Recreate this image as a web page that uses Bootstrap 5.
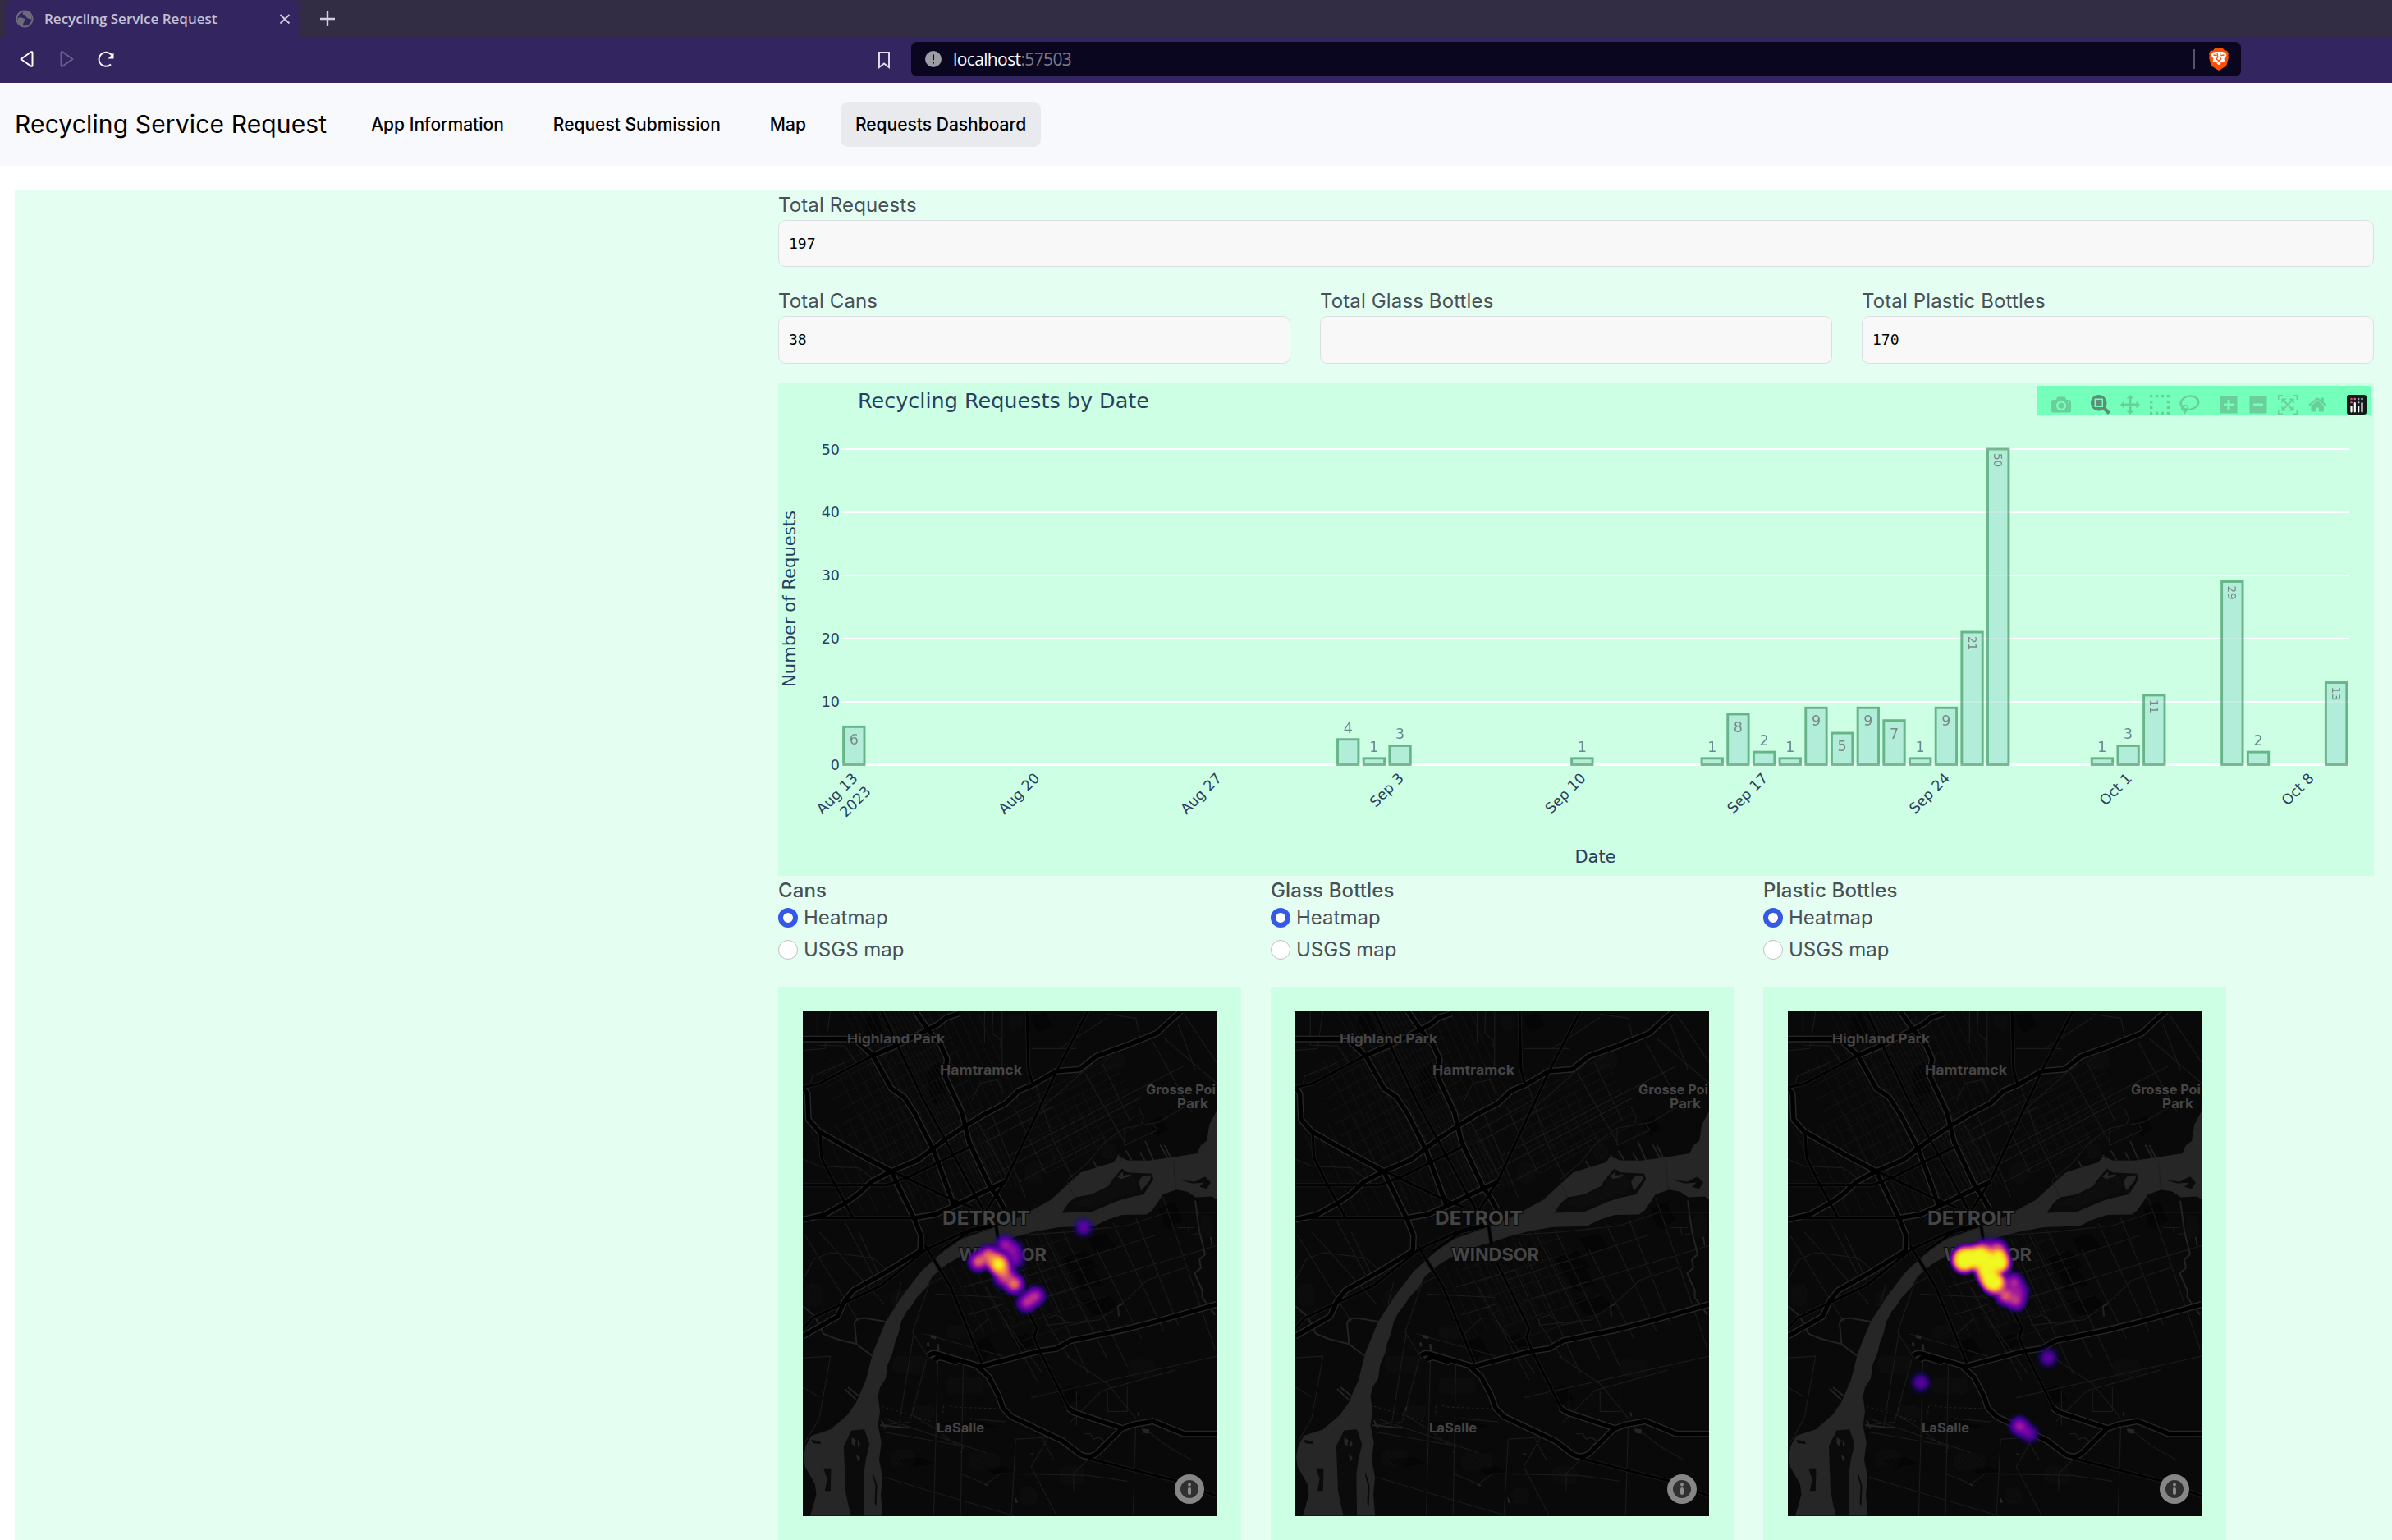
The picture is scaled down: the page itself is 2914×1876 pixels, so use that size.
<!DOCTYPE html>
<html lang="en">
<head>
<meta charset="utf-8">
<title>Recycling Service Request</title>
<link href="https://cdn.jsdelivr.net/npm/bootstrap@5.3.0/dist/css/bootstrap.min.css" rel="stylesheet">
<style>
  body{width:2914px;height:1876px;overflow:hidden;font-family:Inter,sans-serif;font-size:24px;color:#495057;background:#fff}
  .tabstrip{height:45px;background:#322d44;padding-left:6px}
  .browser-tab{width:360px;background:#33255f;border-radius:8px 8px 0 0;padding:0 12px 0 13px;color:#c5c0d4;font:600 17px "Open Sans",sans-serif}
  .tab-title{margin-left:13px}
  .addressbar{height:56px;background:#33255f;padding-left:24px}
  .nav-icons{width:1046px}
  .urlbox{width:1620px;height:42px;margin-left:26px;margin-top:-2px;background:#0b0620;border-radius:7px;padding:0 15px 0 17px;font:21px "Open Sans",sans-serif;color:#fff}
  .urltext{margin-left:14px;letter-spacing:-.62px}
  .urltext span{color:#7c7a88}
  .urlsep{width:2px;height:24px;background:#57536b;margin-right:17px}
  .app-nav{height:101px;background:#f8f9fc;padding:0 18px}
  .app-nav .navbar-brand{font-size:30px;line-height:45px;color:#000;margin-right:36px;padding:0;letter-spacing:.14px}
  .app-nav .nav-pills{gap:24px;margin-left:0}
  .app-nav .nav-link{font-size:21px;line-height:31px;font-weight:500;color:#000;padding:12px 18px;border-radius:9px}
  .app-nav .nav-link.active{background:#e9eaed;color:#000}
  .page-body{margin:30px 0 0 18px;height:1644px;background:#e4fff2}
  .side{width:930px;flex:none}
  .content{width:1944px;flex:none}
  .lbl{line-height:36px;height:36px;letter-spacing:.13px}
  .value-box{height:57px;background:#f8f8f8;border:1px solid #dbdfe3;border-radius:9px;padding:0 12px;font:500 18px/55px "DejaVu Sans Mono",monospace;color:#000}
  .row-b .value-box{height:58px}
  .gap36{gap:36px}
  .chart{height:600px;background:#cdffe5}
  .chart svg{display:block;font-family:"DejaVu Sans",sans-serif}
  .map-col{width:564px;flex:none}
  .map-head{height:33px;line-height:36px;font-weight:500;color:#495057;letter-spacing:.13px}
  .radio-line{height:36px;line-height:36px;margin-bottom:3px;gap:7px}
  .radio-line .form-check-input{width:24px;height:24px;margin:0;border:1.5px solid #bfbfbf;background-color:#fff}
  .radio-line .form-check-input:checked{border:6px solid #3459e6;background:#fff}
  .map-card{margin-top:27px;height:680px;background:#cdffe5;padding:30px}
  .map-card svg{display:block;font-family:Inter,sans-serif}
  .geo path{vector-effect:non-scaling-stroke;fill:none;stroke-linejoin:round}
</style>
</head>
<body>
<div class="tabstrip d-flex align-items-stretch">
  <div class="browser-tab d-flex align-items-center">
    <svg width="22" height="22" viewBox="0 0 22 22"><circle cx="11" cy="11" r="9.6" fill="none" stroke="#6c6b79" stroke-width="2"/><path d="M3 10c3-1 6 0 8 1 2 1 0 3-1 4-1 2-1 4-2 5-4-1-6-5-5-10zM10 2c-2 2-2 4 1 4 1 2 3 1 2 3 1 2 4 1 6 3 2-5-3-11-9-10z" fill="#6c6b79"/></svg>
    <span class="tab-title">Recycling Service Request</span>
    <svg class="ms-auto" width="14" height="14" viewBox="0 0 14 14"><path d="M1.500 2l11 10.500M12.500 2l-11 10.500" stroke="#d0cddb" stroke-width="1.900"/></svg>
  </div>
  <div class="d-flex align-items-center ps-4"><svg width="18" height="18" viewBox="0 0 18 18"><path d="M9 0v18M0 9h18" stroke="#d3d0dc" stroke-width="2.400"/></svg></div>
</div>
<div class="addressbar d-flex align-items-center">
  <div class="nav-icons d-flex align-items-center">
    <svg width="120" height="24" viewBox="0 0 120 24" fill="none" stroke-linejoin="round" stroke-width="2"><path d="M1.500 11l12-8.500q2-1 2 1v15q0 2-2 1z" stroke="#fff"/><path d="M64.500 11l-12-8.500q-2-1-2 1v15q0 2 2 1z" stroke="#6a5f8c"/><path d="M111 17.500a8.600 8.600 0 1 1 .5-12l2 2.500" stroke="#fff" stroke-width="2"/><path d="M114.500 3.500v7h-7z" fill="#fff"/></svg>
  </div>
  <svg width="14" height="22" viewBox="0 0 14 22"><path d="M1 2h12v18l-6-4.500L1 20z" fill="none" stroke="#e4e1ec" stroke-width="1.900"/></svg>
  <div class="urlbox d-flex align-items-center">
    <svg width="20" height="20" viewBox="0 0 20 20"><circle cx="10" cy="10" r="10" fill="#9c9da5"/><path d="M10 4.500v6.800M10 13v2.500" stroke="#0b0620" stroke-width="2"/></svg>
    <div class="urltext">localhost<span>:57503</span></div>
    <div class="urlsep ms-auto"></div>
    <svg width="24" height="28" viewBox="0 0 24 28"><path d="M7 1h10l2 2.500 3 .3 2 3.700-.7 2.200.7 2-2.700 10.500L12 28 2.700 22.200 0 11.700l.7-2L0 7.500l2-3.700 3-.3z" fill="#fb4f04"/><path d="M8 5h8l4 1 1.500 3.500-3 4 .8 3-4 2-3.300 2.800-3.300-2.800-4-2 .8-3-3-4L4 6z" fill="#fff"/><path d="M5.500 9l4 .7M18.500 9l-4 .7M10 6.500l.7 5-1.500 2.500 2.800 2 2.800-2-1.500-2.500.7-5M12 16v1.500M8.500 18.500l3.500-1.500 3.500 1.500" fill="none" stroke="#fb4f04" stroke-width="1.300"/></svg>
  </div>
</div>
<nav class="app-nav navbar navbar-expand d-flex justify-content-start align-items-center">
  <a class="navbar-brand">Recycling Service Request</a>
  <ul class="nav nav-pills flex-nowrap">
    <li class="nav-item"><a class="nav-link">App Information</a></li>
    <li class="nav-item"><a class="nav-link">Request Submission</a></li>
    <li class="nav-item"><a class="nav-link">Map</a></li>
    <li class="nav-item"><a class="nav-link active">Requests Dashboard</a></li>
  </ul>
</nav>
<main class="page-body d-flex">
  <div class="side"></div>
  <div class="content">
    <div class="lbl">Total Requests</div>
    <div class="value-box">197</div>
    <div class="row-b d-flex gap36 my-4">
      <div class="flex-fill w-100"><div class="lbl">Total Cans</div><div class="value-box">38</div></div>
      <div class="flex-fill w-100"><div class="lbl">Total Glass Bottles</div><div class="value-box"></div></div>
      <div class="flex-fill w-100"><div class="lbl">Total Plastic Bottles</div><div class="value-box">170</div></div>
    </div>
    <div class="chart" id="chart"></div>
    <div class="d-flex gap36" id="maps"></div>
  </div>
</main>
<script>
// Bar chart: the view box keeps page units, so the day step is 31.68 and ten requests are 76.9 high
(function(){
  const X0=1040.3, DX=31.68, Y0=931.5, U=7.69;
  const bars=[[0,6],[19,4],[20,1],[21,3],[28,1],[33,1],[34,8],[35,2],[36,1],[37,9],[38,5],[39,9],[40,7],[41,1],[42,9],[43,21],[44,50],[48,1],[49,3],[50,11],[53,29],[54,2],[57,13]];
  const ticks=[[0,'Aug 13'],[7,'Aug 20'],[14,'Aug 27'],[21,'Sep 3'],[28,'Sep 10'],[35,'Sep 17'],[42,'Sep 24'],[49,'Oct 1'],[56,'Oct 8']];
  let s='<svg width="1944" height="600" viewBox="948 467 1944 600">';
  for(let v=10;v<=50;v+=10) s+=`<path d="M1025 ${Math.round(Y0-v*U)}H2862" stroke="#fff" stroke-width="2"/>`;
  s+=`<path d="M1025 ${Y0}H2862" stroke="#fff" stroke-width="3"/>`;
  for(const [d,v] of bars){
    const x=X0+d*DX, t=Y0-v*U;
    s+=`<g opacity=".62"><rect x="${x-12.7}" y="${t}" width="25.400" height="${v*U}" fill="#a0e3d1" stroke="#2a8751" stroke-width="2.900"/>`;
    if(v>9) s+=`<text transform="translate(${x-5} ${t+5}) rotate(90)" font-size="13.500" fill="#444">${v}</text>`;
    else if(v>4) s+=`<text x="${x}" y="${t+22}" text-anchor="middle" font-size="17.500" fill="#444">${v}</text>`;
    else s+=`<text x="${x}" y="${t-8}" text-anchor="middle" font-size="17.500" fill="#2a3f5f">${v}</text>`;
    s+='</g>';
  }
  s+='<g fill="#2a3f5f">';
  for(let v=0;v<=50;v+=10) s+=`<text x="1023" y="${Y0-v*U+6.500}" font-size="17.500" text-anchor="end">${v}</text>`;
  for(const [d,l] of ticks) s+=`<text transform="translate(${X0+d*DX+5.500} 949) rotate(-45)" text-anchor="end" font-size="17.500">${l}</text>`;
  s+='<text transform="translate(1062 965) rotate(-45)" text-anchor="end" font-size="17.500">2023</text>';
  s+='<text x="1045" y="496.500" font-size="25.500" textLength="355" lengthAdjust="spacingAndGlyphs">Recycling Requests by Date</text>';
  s+='<text x="1918.500" y="1050.500" font-size="21" textLength="50" lengthAdjust="spacingAndGlyphs">Date</text>';
  s+='<text transform="translate(968.500 837) rotate(-90)" font-size="20.500" textLength="215" lengthAdjust="spacingAndGlyphs">Number of Requests</text></g>';
  s+='<rect x="2481" y="470" width="408" height="36" fill="#74ffba"/>';
  const icon=(x,y,w,d,c)=>{const k=24/1000;return `<path transform="translate(${x} ${y}) scale(${k} ${-k}) translate(0 -850)" d="${d}" fill="${c||'#6bcf9c'}"/>`};
  s+=icon(2499,481,24,'m500 450c-83 0-150-67-150-150 0-83 67-150 150-150 83 0 150 67 150 150 0 83-67 150-150 150z m400 150h-120c-16 0-34 13-39 29l-31 93c-6 15-23 28-40 28h-340c-16 0-34-13-39-28l-31-94c-6-15-23-28-40-28h-120c-55 0-100-45-100-100v-450c0-55 45-100 100-100h800c55 0 100 45 100 100v450c0 55-45 100-100 100z m-400-550c-138 0-250 112-250 250 0 138 112 250 250 250 138 0 250-112 250-250 0-138-112-250-250-250z m365 380c-19 0-35 16-35 35 0 19 16 35 35 35 19 0 35-16 35-35 0-19-16-35-35-35z');
  s+=icon(2547,481,24,'m1000-25l-250 251c40 63 63 138 63 218 0 224-182 406-407 406-224 0-406-182-406-406s183-406 407-406c80 0 155 22 218 62l250-250 125 125z m-812 250l0 438 437 0 0-438-437 0z m62 375l313 0 0-312-313 0 0 312z','#5d8f76');
  s+=icon(2583,481,24,'m1000 350l-187 188 0-125-250 0 0 250 125 0-188 187-187-187 125 0 0-250-250 0 0 125-188-188 186-187 0 125 252 0 0-250-125 0 187-188 188 188-125 0 0 250 250 0 0-126 187 188z');
  for(let i=0;i<4;i++) for(let j=0;j<4;j++) if(i%3==0||j%3==0) s+=`<rect x="${2619+i*6.9}" y="${481+j*6.9}" width="3.300" height="3.300" fill="#6bcf9c"/>`;
  s+=icon(2655,481,24,'m1018 538c-36 207-290 336-568 286-277-48-473-256-436-463 10-57 36-108 76-151-13-66 11-137 68-183 34-28 75-41 114-42l-55-70 0 0c-2-1-3-2-4-3-10-14-8-34 5-45 14-11 34-8 45 4 1 1 2 3 2 5l0 0 113 140c16 11 31 24 45 40 4 3 6 7 8 11 48-3 100 0 151 9 278 48 473 255 436 462z m-624-379c-80 14-149 48-197 96 42 42 109 47 156 9 33-26 47-66 41-105z m-187-74c-19 16-33 37-39 60 50-32 109-55 174-68-42-25-95-24-135 8z m360 75c-34-7-69-9-102-8 8 62-16 128-68 170-73 59-175 54-244-5-9 20-16 40-20 61-28 159 121 317 333 354s407-60 434-217c28-159-121-318-333-355z');
  s+=icon(2704.5,481,24,'m1 787l0-875 875 0 0 875-875 0z m687-500l-187 0 0-187-125 0 0 187-188 0 0 125 188 0 0 187 125 0 0-187 187 0 0-125z');
  s+=icon(2740.5,481,24,'m0 788l0-876 876 0 0 876-876 0z m688-500l-500 0 0 125 500 0 0-125z');
  s+=icon(2775,481,24,'m250 850l-187 0-63 0 0-62 0-188 63 0 0 188 187 0 0 62z m688 0l-188 0 0-62 188 0 0-188 62 0 0 188 0 62-62 0z m-875-938l0 188-63 0 0-188 0-62 63 0 187 0 0 62-187 0z m875 188l0-188-188 0 0-62 188 0 62 0 0 62 0 188-62 0z m-125 188l-1 0-93-94-156 156 156 156 92-93 2 0 0 250-250 0 0-2 93-92-156-156-156 156 94 92 0 2-250 0 0-250 0 0 93 93 157-156-157-156-93 94 0 0 0-250 250 0 0 0-94 93 156 157 156-157-93-93 0 0 250 0 0 250z');
  s+=icon(2812,481,24,'m786 296v-267q0-15-11-26t-25-10h-214v214h-143v-214h-214q-15 0-25 10t-11 26v267q0 1 0 2t0 2l321 264 321-264q1-1 1-4z m124 39l-34-41q-5-5-12-6h-2q-7 0-12 3l-386 322-386-322q-7-4-13-4-7 2-12 7l-35 41q-4 5-3 13t6 12l401 334q18 15 42 15t43-15l136-114v109q0 8 5 13t13 5h107q8 0 13-5t5-13v-227l122-102q5-5 6-12t-4-13z');
  s+='<rect x="2859" y="481" width="24" height="24" rx="3" fill="#111c18"/><path d="M2864.500 495v6.500M2868.800 491v10.500M2873.200 495.500v6M2877.500 491v10.500" stroke="#fff" stroke-width="2.200" stroke-linecap="round"/>';
  s+='<g fill="#ef3a6e"><circle cx="2864.500" cy="486" r="1.300"/><circle cx="2864.500" cy="490.300" r="1.300"/><circle cx="2868.800" cy="486" r="1.300" fill="#c56a97"/><circle cx="2873.200" cy="486" r="1.300" fill="#a99ad0"/><circle cx="2873.200" cy="490.300" r="1.300" fill="#a99ad0"/><circle cx="2877.500" cy="486" r="1.300" fill="#8ad8e8"/></g></svg>';
  document.getElementById('chart').innerHTML=s;
})();

// Base map, shared by the three panels
(function(){
  const water='M82 1280L150 1262 210 1220 240 1185 275 1120 300 1040 345 950 400 880 470 805 530 760 600 715 720 680 813 649 929 598 987 554 1035 518 1094 503 1150 489 1165 474 1185 477 1200 483 1277 484 1355 475 1447 463 1460 440 1481 427 1490 380 1516 340V597L1500 588 1442 590 1413 574 1374 568 1326 582 1305 608 1287 629 1268 640 1181 641 1130 655 1084 673 958 677 880 688 813 702 740 722 650 742 560 785 510 820 490 850 455 880 440 900 420 920 400 950 390 985 378 1010 370 1040 352 1075 345 1115 325 1140 318 1165 325 1210 318 1250 330 1300 322 1350 334 1400 328 1450 334 1512H78L90 1480 100 1450 95 1420 60 1370 55 1340 62 1310z';
  const isles='M968 635L992 606 1016 590 1074 582 1132 558 1152 534 1181 507 1200 518 1287 522 1292 538 1258 582 1200 592 1161 602 1074 632z M222 1512L210 1470 203 1440 197 1310 225 1265 270 1262 288 1305 275 1350 268 1390 270 1512z M125 1375H152L150 1440H130L138 1405z M1390 541L1440 545 1455 538 1475 530 1495 548 1480 566 1455 560 1470 548 1430 550z M82 1292l30 4 4 8-28-2z M300 1385l15 40-3 60-6-10 3-50-10-30z';
  const slips='M1263 427L1292 482M1316 438L1343 478M1331 439L1355 478M1195 455L1215 483M1079 484L1094 505M1166 467L1181 484M1245 460L1262 484';
  const major=['M52 132H235L300 180 365 275 410 300 450 350 515 455 540 510 585 612','M52 655L130 640 210 603 250 580 295 545 365 515 460 482 520 445 560 420 625 385 690 352 770 318 815 282 865 265 950 225 1030 220 1090 182 1200 150 1305 115 1350 80 1390 52','M450 52L495 105 540 150 562 190 555 240 615 345 640 430 715 560 745 595 765 625','M300 180L385 150 470 115 530 90 560 70 605 58','M52 272L68 290 72 365 110 400 250 465 365 515 445 650 470 700 468 745 350 805 230 860 200 890 175 935 52 992','M445 650L520 640 590 615 715 565 770 545','M495 1050Q510 1036 540 1046L680 1080 890 1035 950 1028 1000 1005 1180 975 1300 950 1516 900','M515 1062Q530 1048 560 1058L600 1068','M670 1080L710 1110 745 1165 760 1200 790 1225 970 1295 1035 1335Q1070 1350 1100 1325L1180 1260 1220 1248 1290 1238 1400 1275 1516 1275','M990 1200L1010 1212 1180 1258'];
  const mid=['M52 272L110 262 300 180','M1060 52L950 225 770 540 700 630','M845 52L850 220 865 265','M330 52L480 310 600 490 690 625','M52 555H350L430 530 640 445','M113 400L118 475 160 545 230 650','M52 650H450','M370 515L560 590 650 620','M485 730L575 850 590 880 685 1070','M735 670L745 722M765 780L880 970 870 995 890 1035 995 1205','M52 970L85 940 330 845 490 740 640 685 720 668','M540 745L640 690 720 675','M1060 1345L1200 1375 1370 1410 1516 1455'];
  const light=['M52 905L95 935 125 985 170 1000 242 1015 298 1050','M242 1015L235 955Q238 938 275 940L345 950','M1440 600L1455 690 1475 755 1455 770 1460 795 1438 810 1465 860 1465 880 1510 930','M1170 935L1167 905 1182 900','M1495 705L1500 730','M325 1250L430 1258M330 1235L345 1260','M200 1145L240 1175M212 1140L250 1165'];
  const dash=['M548 1215L550 1190 600 1198 750 1202','M330 1195L510 1240'];
  const minor=['M52 165L130 160 150 52M105 52V150L200 152 250 210M52 480L110 500 250 505 330 555M75 275L85 240 200 200M52 830L90 770 150 750 300 765 370 815M60 700L250 950M110 690L340 900M250 690L330 830M200 660L300 815M52 1055L150 1050 110 1230 60 1300M52 1140L110 1168M380 900L400 835M440 980L500 840 550 820M440 980L500 1060M445 980L390 1260M480 985L760 1050M490 1060L430 1240 330 1250M530 1050L515 1512M620 1060L610 1512M430 1215L520 1260 600 1310M650 985L710 940 760 940 900 1100M830 800L920 960 1000 1060M520 870L760 880M700 850L880 1120M620 850L830 800M640 930L760 900M920 960L1100 945 1200 885 1270 830 1420 790M915 965V940L950 930 1000 960 1060 950M985 1050L1130 1130 1230 1230M1020 1150V1250M1130 1150V1210H1200V1140M1230 1240L1220 1512M1230 1240L1340 1310 1430 1352M1000 1240L1110 1150 1370 1090M860 1170L1516 1050M340 1270L620 1310 610 1330M340 1400L500 1440 800 1512M610 1390L700 1420 750 1390 1060 1395 1200 1412M805 1290L790 1512M805 1290L920 1285 860 1370M860 1370L950 1512M900 1290L940 1350M1060 1350L1010 1390V1440M1090 740L1250 1000M1150 665L1330 980M1230 650L1380 960M1326 590L1510 1030M840 710L1060 1100M900 690L1130 1060M970 685L1200 1080M1340 634H1516M813 700L1000 690 1200 672 1340 634M860 890L1516 730M800 830L1300 700M700 1330L340 1230M640 1230L770 1240M1380 678H1440M1415 680L1420 700 1450 695M650 310L680 260 740 250 760 290M695 52V145M725 52L722 115 752 135V155M757 52V240M860 160H1020M1130 60L1230 72 1245 130M1130 70L960 160M870 250L940 430 1010 540M1050 230L1190 430M1110 200L1210 370M1290 140L1430 345M1330 130L1516 260M1380 90L1440 220M1400 60L1516 200M800 330L910 520M900 330L1080 200M780 470L1400 210M740 520L1250 300M820 545L1120 415M720 350L840 590M670 370L780 540M987 540L1060 490 1120 430 1190 390 1310 373 1400 330M1190 390V440L1307 395 1290 378M1250 378L1258 360 1240 330M700 430L930 330M690 400L890 310'];
  // street grids, one family of parallel lines per neighbourhood: x, y, step, slope vector, count
  const grids=[[200,52,24,260,420,6],[150,190,34,190,310,6],[340,52,14,330,500,7],[460,52,30,180,320,7],[80,400,44,150,260,6],[410,540,26,80,130,8],[600,430,17,90,160,8],[640,700,30,160,270,9],[860,340,36,90,150,6],[540,800,36,120,200,7]];
  let g='';
  for(const [x,y,st,dx,dy,n] of grids) for(let i=0;i<n;i++) g+=`M${x+i*st} ${y-i*st*.28}l${dx} ${dy}`;
  for(let i=0;i<9;i++) g+=`M${120+i*18} ${235+i*36}l260 -115M${430+i*20} ${190+i*42}l150 -66M${800+i*14} ${330+i*24}l350 -150`;
  for(let i=0;i<7;i++) g+=`M${640+i*34} ${800+i*42}l360 -95`;
  const tex=[[60,840,60,65],[480,70,40,30],[780,60,50,45],[1110,170,80,50],[1105,435,55,45],[840,490,60,60],[370,1050,120,50],[560,1110,130,50],[440,1190,80,40],[360,1320,90,50],[640,1330,110,50],[960,1370,90,50],[360,860,70,50],[1200,1060,100,50],[560,960,80,40],[820,1430,60,50],[1460,640,45,70]];
  const blocks=[[270,60,50,70],[490,210,55,110],[1280,360,50,50],[860,60,60,50],[970,750,100,60],[1010,800,80,60],[1040,880,120,50],[650,1000,70,60],[950,1140,70,50],[1310,610,70,70],[380,1345,110,25],[700,1370,80,20],[540,1240,160,20],[790,990,70,40],[1060,700,80,50]];
  const P=(a,c,w,o='')=>a.map(d=>`<path d="${d}" stroke="${c}" stroke-width="${w}" ${o}/>`).join('');
  const base=`<rect width="504" height="615" fill="#090909"/>
   <g class="geo" transform="scale(.34439 .42091) translate(-52 -52)">
   ${blocks.map(([x,y,w,h])=>`<path d="M${x} ${y+h*.2}l${w*.8} ${-h*.3} ${w*.45} ${h*.8} ${-w*.5} ${h*.15} ${-w*.1} ${h*.2} ${-w*.35} ${-h*.1}z" style="fill:#050505"/>`).join('')}
   ${P([g],'#131313',1)}${P(minor,'#1a1a1a',1.2)}
   ${tex.map(b=>`<rect x="${b[0]}" y="${b[1]}" width="${b[2]}" height="${b[3]}" rx="20" fill="url(#dots)"/>`).join('')}
   <path d="${water}" style="fill:#262626"/>${P([slips],'#232323',1.8)}<path d="${isles}" style="fill:#0b0b0b"/>
   <path d="M1000 608L1080 585 1140 560 1165 535 1220 530 1240 555 1220 578 1160 590 1070 620z" style="fill:url(#dots)"/><path d="M1240 545l10-14 35-5-6 16-30 30zM1165 530l20-15 0 12 30-4-10 8-28 6z" style="fill:#262626"/>
   <path d="M225 1285l15 8-5 18-10-8zM245 1290l10 15-8 8zM240 1335l15 8-8 12zM440 1200l8-5-4 18zM505 988l20 3-3 10-18-4zM490 1012l8-3 3 12-8 2zM525 1015l8 0 3 18-8-2zM1250 1260l28 2-2 13-20-3zM690 1420l20 2-4 5zM855 1330l15 2-3 4zM802 1455l12 18-10 2zM1235 1210l10 8-6 8z" style="fill:#262626"/>
   ${P(light,'#232323',2)}${P(dash,'#232323',1,'stroke-dasharray="3 3"')}
   ${P(['M1045 1275l25 0 10 15 20-5 25 15-20 5','M1363 485l8 80','M987 545l27 44'],'#1f1f1f',1.200)}
   ${P(mid,'#181818',5)}${P(major,'#272727',8)}${P(mid,'#000',3)}${P(major,'#000',5.200)}
   </g>
   <g fill="#454545" stroke="#0a0a0a" stroke-width="2" paint-order="stroke" font-weight="700" font-size="16">
   <text x="54" y="39" textLength="119" lengthAdjust="spacingAndGlyphs">Highland Park</text><text x="167" y="77" textLength="100" lengthAdjust="spacingAndGlyphs">Hamtramck</text>
   <text x="418" y="101" textLength="85" lengthAdjust="spacingAndGlyphs">Grosse Poi</text><text x="456" y="118" textLength="38" lengthAdjust="spacingAndGlyphs">Park</text>
   <text x="163" y="513" textLength="58" lengthAdjust="spacingAndGlyphs">LaSalle</text>
   <text x="170" y="260" font-size="23" textLength="107" lengthAdjust="spacingAndGlyphs">DETROIT</text><text x="190" y="303.500" font-size="22" textLength="107" lengthAdjust="spacingAndGlyphs">WINDSOR</text></g>`;
  const info='<circle cx="471" cy="582" r="18" fill="#868686"/><circle cx="471" cy="582" r="11" fill="#303030"/><circle cx="471" cy="576.500" r="2" fill="#8a8a8a"/><rect x="469" y="580" width="4" height="9" rx="2" fill="#8a8a8a"/>';
  const data=[
   ['Cans',[[342,263,.19],[246,284,.32],[257,291,.24],[259,303,.2],[214,305,.58],[226,297,.55],[232,302,.35],[238.5,308,.97],[238.5,308,.75],[247,319,.4],[243,318,.3],[244,327,.22],[257.5,332,.65],[284,346.5,.36],[272,355,.36],[278,350,.12]]],
   ['Glass Bottles',[]],
   ['Plastic Bottles',[[213,302,.99],[213,306,.99],[213,299,.99],[217,306,.95],[220,297,.99],[225,303,.99],[234,295,.99],[233,303,.99],[229,299,.99],[244,301,.99],[240,309,.99],[238,300,.99],[252,306,.99],[258,305,.99],[259,308,.99],[257,297,.95],[248,311,.9],[240,316,.99],[244,323,.99],[248,329,.99],[255,330,.99],[251,333,.9],[247,325,.9],[241,288,.3],[255,288,.35],[265,346,.58],[278,353,.42],[275,330,.38],[283,341,.25],[317,422,.19],[162,452,.19],[282,505,.34],[294,514,.21]]]];
  const plasma=['0d0887','41049d','6a00a8','8f0da4','b12a90','cc4778','e16462','f2844b','fca636','fcce25','f0f921'];
  const tab=k=>plasma.map(h=>(parseInt(h.substr(k,2),16)/255).toFixed(3)).join(' ');
  const defs=`<defs><pattern id="dots" width="9" height="8" patternUnits="userSpaceOnUse"><path d="M1 2h3M5 6h3" stroke="#191919" stroke-width="2"/></pattern>
   <radialGradient id="spot"><stop offset="0" stop-color="#fff"/><stop offset=".2" stop-color="#fff" stop-opacity=".88"/><stop offset=".4" stop-color="#fff" stop-opacity=".6"/><stop offset=".6" stop-color="#fff" stop-opacity=".32"/><stop offset=".8" stop-color="#fff" stop-opacity=".12"/><stop offset="1" stop-color="#fff" stop-opacity="0"/></radialGradient>
   <filter id="plasma" filterUnits="userSpaceOnUse" x="0" y="0" width="504" height="615" color-interpolation-filters="sRGB"><feColorMatrix values="0 0 0 1 0 0 0 0 1 0 0 0 0 1 0 0 0 0 1 0"/><feComponentTransfer><feFuncR type="table" tableValues="${tab(0)}"/><feFuncG type="table" tableValues="${tab(2)}"/><feFuncB type="table" tableValues="${tab(4)}"/><feFuncA type="table" tableValues="0 .8 .97 1 1 1 1 1 1 1 1"/></feComponentTransfer></filter></defs>`;
  document.getElementById('maps').innerHTML=data.map(([name,pts],i)=>`<div class="map-col"><div class="map-head">${name}</div>
   <div class="radio-line d-flex align-items-center"><input class="form-check-input" type="radio" name="r${i}" checked><span>Heatmap</span></div>
   <div class="radio-line d-flex align-items-center"><input class="form-check-input" type="radio" name="r${i}"><span>USGS map</span></div>
   <div class="map-card"><svg width="504" height="615" viewBox="0 0 504 615">${i?'':defs}${base}
   <g filter="url(#plasma)">${pts.map(p=>`<circle cx="${p[0]}" cy="${p[1]}" r="16.500" fill="url(#spot)" opacity="${p[2]}"/>`).join('')}</g>${info}</svg></div></div>`).join('');
})();
</script>
<script src="https://cdn.jsdelivr.net/npm/bootstrap@5.3.0/dist/js/bootstrap.bundle.min.js"></script>
</body>
</html>
